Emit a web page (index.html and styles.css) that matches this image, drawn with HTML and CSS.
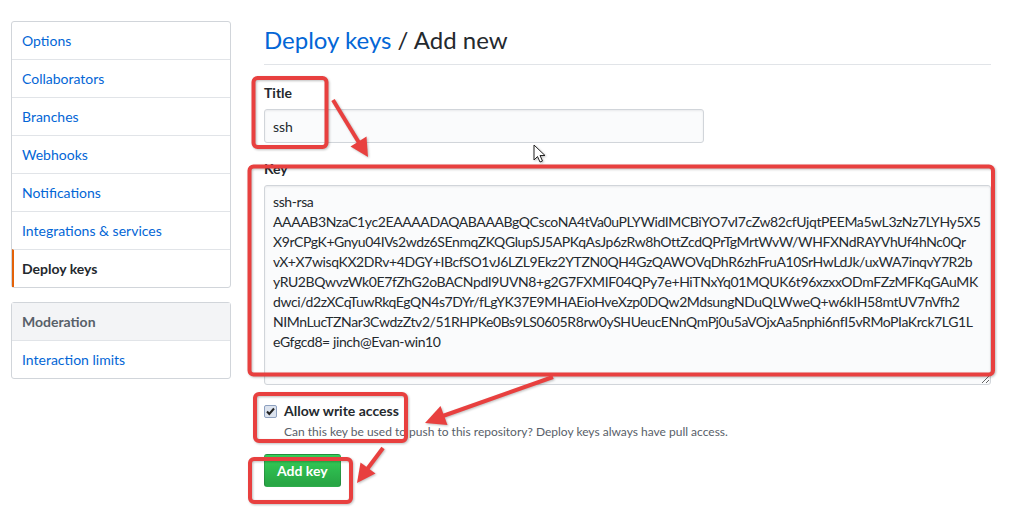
FILE: index.html
```html
<!DOCTYPE html>
<html lang="en">
<head>
    <meta charset="UTF-8">
    <title>Deploy keys / Add new</title>
    <link rel="stylesheet" href="styles.css">
</head>
<body>
    <div class="page">
        <div class="sidebar">
            <nav class="menu">
                <a class="menu-item" href="#">Options</a>
                <a class="menu-item" href="#">Collaborators</a>
                <a class="menu-item" href="#">Branches</a>
                <a class="menu-item" href="#">Webhooks</a>
                <a class="menu-item" href="#">Notifications</a>
                <a class="menu-item" href="#">Integrations &amp; services</a>
                <a class="menu-item selected" href="#">Deploy keys</a>
            </nav>
            <nav class="menu">
                <div class="menu-heading">Moderation</div>
                <a class="menu-item" href="#">Interaction limits</a>
            </nav>
        </div>

        <div class="main">
            <h2 class="subhead"><a href="#">Deploy keys</a> / Add new</h2>

            <form>
                <div class="form-group first">
                    <label class="form-label">Title</label>
                    <input class="form-control title-input" type="text" value="ssh">
                </div>
                <div class="form-group">
                    <label class="form-label">Key</label>
                    <textarea class="form-control key-input" wrap="off">ssh-rsa
AAAAB3NzaC1yc2EAAAADAQABAAABgQCscoNA4tVa0uPLYWidIMCBiYO7vI7cZw82cfUjqtPEEMa5wL3zNz7LYHy5X5
X9rCPgK+Gnyu04IVs2wdz6SEnmqZKQGlupSJ5APKqAsJp6zRw8hOttZcdQPrTgMrtWvW/WHFXNdRAYVhUf4hNc0Qr
vX+X7wisqKX2DRv+4DGY+IBcfSO1vJ6LZL9Ekz2YTZN0QH4GzQAWOVqDhR6zhFruA10SrHwLdJk/uxWA7inqvY7R2b
yRU2BQwvzWk0E7fZhG2oBACNpdI9UVN8+g2G7FXMIF04QPy7e+HiTNxYq01MQUK6t96xzxxODmFZzMFKqGAuMK
dwci/d2zXCqTuwRkqEgQN4s7DYr/fLgYK37E9MHAEioHveXzp0DQw2MdsungNDuQLWweQ+w6kIH58mtUV7nVfh2
NIMnLucTZNar3CwdzZtv2/51RHPKe0Bs9LS0605R8rw0ySHUeucENnQmPj0u5aVOjxAa5nphi6nfI5vRMoPIaKrck7LG1L
eGfgcd8= jinch@Evan-win10</textarea>
                </div>

                <div class="form-checkbox">
                    <label class="check-label">
                        <span class="check-box">
                            <svg width="11" height="11" viewBox="0 0 11 11"><path d="M2 5.5 L4.3 8 L9 2.5" fill="none" stroke="#222" stroke-width="2"/></svg>
                        </span>
                        Allow write access
                    </label>
                    <p class="note">Can this key be used to push to this repository? Deploy keys always have pull access.</p>
                </div>

                <button class="btn-primary" type="button">Add key</button>
            </form>
        </div>
    </div>

    <!-- screenshot annotations -->
    <svg class="marks" width="1017" height="516" viewBox="0 0 1017 516">
        <g fill="none" stroke="#e8403f" stroke-width="4" stroke-linejoin="round">
            <rect x="253.5" y="78" width="73" height="69" rx="4"/>
            <rect x="249.5" y="166.5" width="743.5" height="208" rx="4"/>
            <rect x="255" y="394" width="151" height="47" rx="4"/>
            <rect x="250" y="459" width="101" height="43" rx="4"/>
            <line x1="333" y1="100" x2="361" y2="146"/>
            <line x1="553" y1="377" x2="440" y2="417"/>
            <line x1="383" y1="448" x2="365" y2="472"/>
        </g>
        <g fill="#e8403f">
            <polygon points="368,157 350.5,146.5 366.5,136.5"/>
            <polygon points="425,423 440.5,406 447.5,425"/>
            <polygon points="357,483 360.5,462.5 375.5,473.5"/>
        </g>
        <path d="M534 145 L534 160 L537.5 156.5 L540 162 L542.5 161 L540 155.5 L545 155.5 Z" fill="#fff" stroke="#222" stroke-width="1"/>
    </svg>
</body>
</html>
```

FILE: styles.css
```css
body {
    margin: 0;
    font-family: Lato, "Noto Sans", sans-serif;
    font-size: 14px;
    color: #24292e;
    background: #fff;
}
a {
    color: #0366d6;
    text-decoration: none;
}
.page {
    display: flex;
    gap: 33px;
    padding: 21px 0 0 11px;
}

/* left menu */
.sidebar {
    width: 220px;
    flex-shrink: 0;
}
.menu {
    border: 1px solid #d1d5da;
    border-radius: 3px;
    margin-bottom: 14px;
}
.menu-item,
.menu-heading {
    display: block;
    padding: 8px 10px;
    line-height: 21px;
    border-top: 1px solid #e1e4e8;
}
.menu-item:first-child,
.menu-heading {
    border-top: 0;
}
.menu-item.selected {
    padding-left: 8px;
    border-left: 2px solid #e36209;
    color: #24292e;
    font-weight: 700;
}
.menu-heading {
    background: #f3f4f6;
    color: #586069;
    font-weight: 700;
}

/* main column */
.main {
    width: 727px;
}
.subhead {
    margin: 0;
    padding: 4px 0 9px;
    font-size: 24px;
    font-weight: 400;
    line-height: 30px;
    border-bottom: 1px solid #e1e4e8;
}
.form-group {
    margin: 15px 0;
}
.form-group.first {
    margin-top: 17px;
}
.form-label {
    display: block;
    font-weight: 700;
    line-height: 21px;
    margin-bottom: 6px;
}
.form-control {
    box-sizing: border-box;
    font-family: inherit;
    font-size: 14px;
    color: #24292e;
    background: #fafbfc;
    border: 1px solid #d1d5da;
    border-radius: 3px;
    box-shadow: inset 0 1px 2px rgba(27, 31, 35, 0.075);
    outline: none;
}
.title-input {
    width: 440px;
    height: 34px;
    padding: 6px 8px;
}
.key-input {
    display: block;
    width: 727px;
    height: 200px;
    padding: 6px 8px;
    line-height: 20px;
    letter-spacing: -0.4px;
    overflow: hidden;
    resize: vertical;
}

.form-checkbox {
    margin: 15px 0 13px;
    padding-left: 20px;
}
.check-label {
    position: relative;
    font-weight: 700;
    line-height: 21px;
}
.check-box {
    position: absolute;
    left: -20px;
    top: 3px;
    width: 11px;
    height: 11px;
    border: 1px solid #8da0bf;
    border-radius: 2px;
    background: #dce3ee;
}
.check-box svg {
    display: block;
}
.note {
    margin: 2px 0 0;
    font-size: 12px;
    line-height: 18px;
    color: #586069;
}

.btn-primary {
    height: 33px;
    padding: 0 12px;
    font-family: inherit;
    font-size: 14px;
    font-weight: 700;
    color: #fff;
    background: linear-gradient(#34d058, #28a745 90%);
    border: 1px solid rgba(27, 31, 35, 0.2);
    border-radius: 3px;
}

.marks {
    position: absolute;
    top: 0;
    left: 0;
    pointer-events: none;
    filter: drop-shadow(1px 1px 1px rgba(0, 0, 0, 0.25));
}
```
